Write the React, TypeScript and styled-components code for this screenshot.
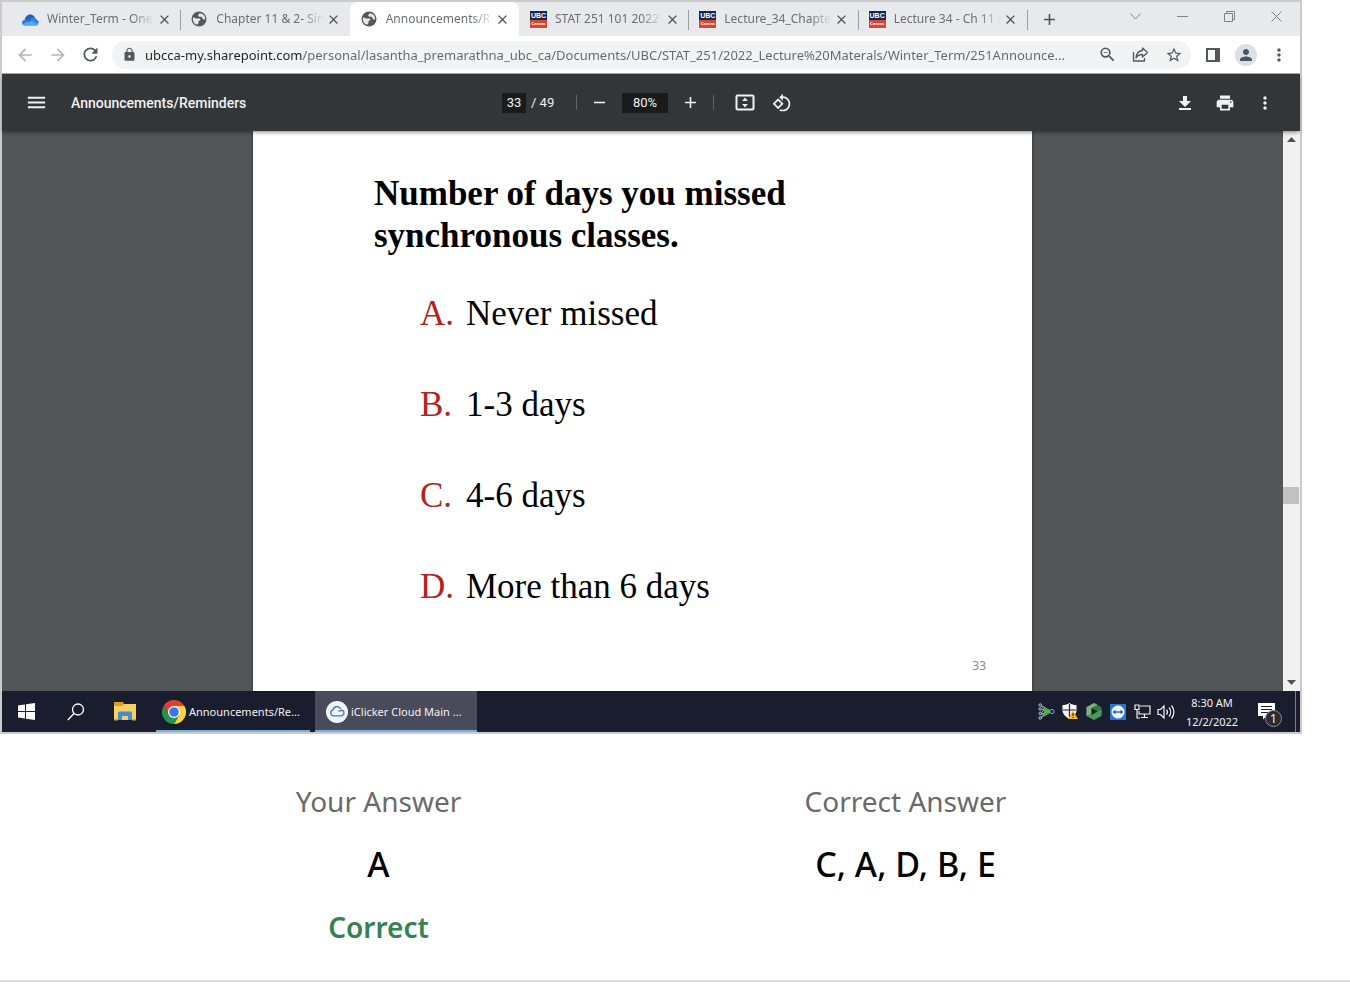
import React from "react";
import styled, { createGlobalStyle } from "styled-components";
import {
  MdAdd,
  MdArrowBack,
  MdArrowForward,
  MdClose,
  MdLock,
  MdMenu,
  MdMoreVert,
  MdPerson,
  MdPrint,
  MdRefresh,
  MdRemove,
  MdRotate90DegreesCcw,
  MdStarBorder,
  MdZoomOut,
} from "react-icons/md";

const Global = createGlobalStyle`
  * { box-sizing: border-box; }
  body { margin: 0; background: #fff; color: #000; font-family: "Noto Sans", "Open Sans", sans-serif; }
  button { border: 0; padding: 0; background: none; color: inherit; font: inherit; cursor: pointer; }
  h1, h2, p, ol, dl, dd { margin: 0; padding: 0; }
  svg { display: block; flex: none; }
`;

const Capture = styled.section`
  margin-right: 48px;
  border: 2px solid #cbcbcb;
`;

/* ---------- browser tabs ---------- */

const TabStrip = styled.div`
  display: flex;
  align-items: stretch;
  height: 34px;
  padding-left: 9px;
  background: #e8e9ed;
`;

const Tabs = styled.div`
  display: flex;
  flex: 0 1 1016px;
  min-width: 0;
`;

const Tab = styled.div<{ $active?: boolean; $divider?: boolean }>`
  position: relative;
  display: flex;
  flex: 1 1 0;
  align-items: center;
  min-width: 0;
  padding: 0 6px 0 10px;
  border-radius: 8px 8px 0 0;
  background: ${(p) => (p.$active ? "#fff" : "transparent")};

  &::after {
    content: "";
    position: absolute;
    top: 8px;
    right: -1px;
    width: ${(p) => (p.$divider ? "1px" : "0")};
    height: 20px;
    background: #9b9ea3;
  }
`;

const TabLabel = styled.button`
  flex: 1;
  min-width: 0;
  margin-left: 8px;
  overflow: hidden;
  white-space: nowrap;
  text-align: left;
  font-size: 12px;
  line-height: 18px;
  color: #6b6e73;
  mask-image: linear-gradient(90deg, #000 80%, transparent 100%);
`;

const TabClose = styled.button`
  display: grid;
  flex: none;
  place-items: center;
  width: 20px;
  height: 20px;
  color: #4e5156;
`;

const NewTab = styled.button`
  display: grid;
  place-items: center;
  width: 44px;
  color: #4e5156;
`;

const WindowButtons = styled.div`
  display: flex;
  margin-left: auto;
  height: 28px;
`;

const WindowButton = styled.button`
  display: grid;
  place-items: center;
  width: 47px;
  color: #808286;
`;

const CourseIcon = styled.span`
  display: flex;
  flex: none;
  flex-direction: column;
  width: 17px;
  height: 17px;
  margin-left: 1px;
  background: #d9452f;
  color: #fff;
  text-align: center;
  font-family: "Liberation Sans", Arial, sans-serif;
  font-weight: 700;
`;

const CourseTop = styled.span`
  height: 9px;
  background: #14284f;
  font-size: 7px;
  line-height: 9px;
`;

const CourseBottom = styled.span`
  font-size: 4px;
  line-height: 8px;
`;

/* ---------- address bar ---------- */

const AddressRow = styled.div`
  display: flex;
  align-items: center;
  height: 38px;
  padding: 0 5px 0 6px;
  border-bottom: 1px solid #a6a7a9;
  background: #fff;
`;

const IconButton = styled.button<{ $dim?: boolean }>`
  display: grid;
  flex: none;
  place-items: center;
  width: 33px;
  height: 28px;
  color: ${(p) => (p.$dim ? "#b5b7ba" : "#54575b")};
`;

const Omnibox = styled.form`
  display: flex;
  flex: 1;
  align-items: center;
  min-width: 0;
  height: 28px;
  margin: 0 5px;
  padding: 0 1px 0 10px;
  border-radius: 14px;
  background: #f1f3f4;
  color: #54575b;
`;

const UrlInput = styled.input`
  flex: 1;
  min-width: 0;
  height: 24px;
  margin-left: 8px;
  padding: 0;
  border: 0;
  outline: 0;
  font: 13px "Noto Sans", "Open Sans", sans-serif;
  color: transparent;
  background: linear-gradient(90deg, #202124 157px, #63666b 157px);
  background-clip: text;
  -webkit-background-clip: text;
`;

const Avatar = styled.span`
  display: grid;
  place-items: center;
  width: 22px;
  height: 22px;
  border-radius: 50%;
  background: #dcdfe5;
  color: #4a5368;
`;

/* ---------- document viewer ---------- */

const ViewerBar = styled.header`
  position: relative;
  z-index: 1;
  display: grid;
  grid-template-columns: 1fr auto 1fr;
  align-items: center;
  height: 57px;
  background: #323639;
  color: #f1f1f1;
  font-family: Roboto, sans-serif;
  font-size: 13px;
  box-shadow: 0 2px 4px -1px rgba(0, 0, 0, 0.5);
`;

const ViewerGroup = styled.div<{ $end?: boolean }>`
  display: flex;
  align-items: center;
  justify-content: ${(p) => (p.$end ? "flex-end" : "flex-start")};
  padding: ${(p) => (p.$end ? "0 15px 0 0" : "0 0 0 16px")};
`;

const ViewerControls = styled.div`
  display: flex;
  align-items: center;
`;

const ViewerButton = styled.button`
  display: grid;
  place-items: center;
  width: 37px;
  height: 36px;
`;

const ViewerEndButton = styled(ViewerButton)`
  width: 40px;
`;

const DocTitle = styled.h1`
  margin-left: 16px;
  font-size: 14px;
  font-weight: 500;
  line-height: 20px;
`;

const NumberField = styled.input<{ $wide?: boolean }>`
  width: ${(p) => (p.$wide ? "46px" : "24px")};
  height: 20px;
  margin: ${(p) => (p.$wide ? "0 4px" : "0 5px 0 0")};
  padding: 0;
  border: 0;
  background: #191b1c;
  color: inherit;
  font: inherit;
  text-align: center;
`;

const Rule = styled.span<{ $spaced?: boolean }>`
  width: 1px;
  height: 15px;
  margin: ${(p) => (p.$spaced ? "0 12px 0 4px" : "0 4px")};
  background: #606467;
`;

const PageTotal = styled.span`
  width: 41px;
  line-height: 20px;
`;

const Viewer = styled.div`
  display: flex;
  background: #525659;
`;

const PageArea = styled.main`
  display: flex;
  flex: 1;
  justify-content: center;
  min-width: 0;
`;

const Slide = styled.article`
  display: flex;
  flex: 0 1 779px;
  flex-direction: column;
  min-height: 560px;
  padding: 42px 46px 15px 121px;
  background: #fff;
  box-shadow: 0 0 3px rgba(0, 0, 0, 0.5);
  font-family: "Liberation Serif", "Times New Roman", serif;
  font-size: 35px;
  line-height: 42px;
`;

const Question = styled.h2`
  max-width: 460px;
  font-size: inherit;
  font-weight: 700;
`;

const Choices = styled.ol`
  display: flex;
  flex-direction: column;
  gap: 49px;
  margin: 36px 0 0 46px;
  list-style: none;
`;

const Choice = styled.li`
  display: flex;
`;

const Letter = styled.span`
  width: 46px;
  color: #b3221b;
`;

const SlideNumber = styled.p`
  margin-top: auto;
  text-align: right;
  font: 12px/20px "Noto Sans", "Open Sans", sans-serif;
  color: #8b8b8b;
`;

const Scrollbar = styled.div`
  display: flex;
  flex-direction: column;
  width: 17px;
  background: #f1f1f1;
`;

const ScrollButton = styled.button`
  display: grid;
  place-items: center;
  height: 17px;
  color: #505050;
`;

const Thumb = styled.div`
  height: 17px;
  margin-right: 1px;
  background: #c1c1c1;
`;

const TrackPart = styled.div<{ $share: number }>`
  flex: ${(p) => p.$share} 1 0;
`;

/* ---------- taskbar ---------- */

const Taskbar = styled.footer`
  display: flex;
  align-items: stretch;
  height: 41px;
  background: #1a1d2d;
  color: #f2f2f5;
  font-size: 11px;
`;

const TaskIcon = styled.button`
  display: grid;
  place-items: center;
  width: 49px;
`;

const TaskButton = styled.button<{ $active?: boolean }>`
  display: flex;
  align-items: center;
  width: ${(p) => (p.$active ? "162px" : "154px")};
  margin-left: ${(p) => (p.$active ? "5px" : "7px")};
  padding-left: ${(p) => (p.$active ? "11px" : "6px")};
  box-shadow: inset 0 -2px #76aee0;
  background: ${(p) => (p.$active ? "#494b5a" : "transparent")};
  white-space: nowrap;
`;

const TaskText = styled.span`
  margin-left: 3px;
`;

const Tray = styled.div`
  display: flex;
  align-items: center;
  margin-left: auto;
`;

const TrayButton = styled.button`
  display: grid;
  place-items: center;
  width: 24px;
  height: 32px;
`;

const Clock = styled.time`
  width: 68px;
  text-align: center;
  line-height: 19px;
`;

const Notices = styled.button`
  position: relative;
  width: 49px;
  height: 40px;
  padding-left: 12px;
`;

const NoticeCount = styled.span`
  position: absolute;
  right: 13px;
  bottom: 5px;
  width: 17px;
  height: 17px;
  border: 1px solid #8d8e92;
  border-radius: 50%;
  background: #2b2c30;
  font-size: 12px;
  line-height: 15px;
`;

const ShowDesktop = styled.button`
  align-self: stretch;
  width: 5px;
  border-left: 1px solid #7c7f8b;
`;

/* ---------- answers ---------- */

const Answers = styled.dl`
  display: grid;
  grid-template-columns: 1fr 1fr;
  padding: 47px 181px 33px 115px;
  border-bottom: 2px solid #dcdcdc;
  text-align: center;
  line-height: 40px;
`;

const AnswerColumn = styled.div`
  display: flex;
  flex-direction: column;
  gap: 23px;
`;

const AnswerLabel = styled.dt`
  font-size: 28px;
  color: #6a6a6a;
`;

const AnswerValue = styled.dd`
  font-size: 34px;
  font-weight: 500;
`;

const Verdict = styled.dd`
  font-size: 28px;
  font-weight: 600;
  color: #33824f;
`;

const Cloud = () => (
  <svg width="18" height="17" viewBox="0 0 18 17">
    <path d="M4 9.500C3.500 5.500 7 3 10 3.500c2 .3 3.300 1.500 4 3L9 12H3Z" fill="#1f5fc0" />
    <path d="M9 8.500c1.500-2.500 6-2.500 7 .5 1.500.7 2 1.800 1.800 3L15 14Z" fill="#3189dc" />
    <path d="M1 11.500c0-2 2-3.500 4.500-3 1.500.2 2.500 1 4 1.800l7.500 2.700c-.5 1-1.400 1.500-2.500 1.500H4c-2 0-3-1.300-3-3Z" fill="#2f7ad6" />
    <path d="M1.500 13 9 10.300l8.200 2.700c-.5 1-1.500 1.500-2.700 1.500H4c-1 0-2-.5-2.500-1.500Z" fill="#4eabee" />
  </svg>
);

const Globe = () => (
  <svg width="18" height="18" viewBox="0 0 18 18">
    <circle cx="9" cy="9" r="7.500" fill="#54575b" />
    <path d="M3.200 7.200 6 8.500h3.500c1 0 1.200 1.600.3 2L8.500 11v2l-1.300 1.800C4.500 14 2.800 12 2.900 9Z" fill="#e8e9ed" />
    <path d="M9.500 3.200 8 5.500l1.500 1.300h2.300l1 2.200 2.300.8C15.500 6.300 13.500 3.500 9.500 3.200Z" fill="#e8e9ed" />
  </svg>
);

const Course = () => (
  <CourseIcon>
    <CourseTop>UBC</CourseTop>
    <CourseBottom>Canvas</CourseBottom>
  </CourseIcon>
);

const tabs = [
  { label: "Winter_Term - OneD", icon: Cloud, divider: true },
  { label: "Chapter 11 & 2- Sin", icon: Globe },
  { label: "Announcements/Re", icon: Globe, active: true },
  { label: "STAT 251 101 2022W", icon: Course, divider: true },
  { label: "Lecture_34_Chapter", icon: Course, divider: true },
  { label: "Lecture 34 - Ch 11 &", icon: Course, divider: true },
];

const choices = [
  ["A.", "Never missed"],
  ["B.", "1-3 days"],
  ["C.", "4-6 days"],
  ["D.", "More than 6 days"],
];

const ShareIcon = () => (
  <svg width="17" height="17" viewBox="0 0 17 17" fill="none" stroke="currentColor" strokeWidth="1.300" strokeLinejoin="round">
    <path d="M1.500 6v9h11v-3" />
    <path d="M10.500 2 15.500 6.500l-5 4.500V8.500C7.500 8.300 5.500 9.500 4 12c.3-4 2.500-7 6.500-7.500Z" />
  </svg>
);

const SidePanelIcon = () => (
  <svg width="14" height="14" viewBox="0 0 14 14" fill="currentColor">
    <path d="M0 0h14v14H0ZM2 2v10h7V2Z" fillRule="evenodd" />
  </svg>
);

const DownloadIcon = () => (
  <svg width="14" height="16" viewBox="0 0 14 16" fill="currentColor">
    <path d="M5 1h4v5h4l-6 6-6-6h4ZM1 13h12v2H1Z" />
  </svg>
);

const FitIcon = () => (
  <svg width="20" height="17" viewBox="0 0 20 17">
    <rect x="1.500" y="1.500" width="17" height="14" rx="1" fill="none" stroke="currentColor" strokeWidth="2" />
    <path d="m10 3.500 2.800 3.500H7.200ZM10 13.500 7.200 10h5.600Z" fill="currentColor" />
  </svg>
);

const Arrow = ({ down }: { down?: boolean }) => (
  <svg width="9" height="5" viewBox="0 0 9 5" fill="currentColor">
    <path d={down ? "M0 0h9L4.500 5Z" : "M0 5h9L4.500 0Z"} />
  </svg>
);

const WindowsLogo = () => (
  <svg width="17" height="17" viewBox="0 0 17 17" fill="#fff">
    <path d="M0 2.500 7 1.500V8H0ZM8 1.300 17 0v8H8ZM0 9h7v6.500l-7-1ZM8 9h9v8l-9-1.300Z" />
  </svg>
);

const SearchIcon = () => (
  <svg width="18" height="18" viewBox="0 0 18 18" fill="none" stroke="#fff" strokeWidth="1.300">
    <circle cx="11" cy="6.500" r="5.500" />
    <path d="M7 10.500.8 17" />
  </svg>
);

const FolderIcon = () => (
  <svg width="22" height="19" viewBox="0 0 22 19">
    <path d="M0 2h22v16H0Z" fill="#f7cf62" />
    <path d="M0 0h9.500v3L8 4H0Z" fill="#dc9d25" />
    <path d="M4 18v-7a1.500 1.500 0 0 1 1.500-1.500h11A1.500 1.500 0 0 1 18 11v7h-4v-4H8v4Z" fill="#3f8fd6" />
    <path d="M0 17h4v1.500H0ZM18 17h4v1.500h-4Z" fill="#dba93a" />
  </svg>
);

const ChromeLogo = () => (
  <svg width="24" height="24" viewBox="0 0 24 24">
    <path d="M12 6h10.400A12 12 0 0 1 12 24l5.200-9Z" fill="#fdd03f" />
    <path d="M1.600 6A12 12 0 0 0 12 24l5.200-9L12 17l-5.200-2Z" fill="#24964b" />
    <path d="M12 6h10.400A12 12 0 0 0 1.600 6l5.200 9Z" fill="#dc4234" />
    <circle cx="12" cy="12" r="6" fill="#fff" />
    <circle cx="12" cy="12" r="4.800" fill="#3b78e7" />
  </svg>
);

const IClickerLogo = () => (
  <svg width="22" height="22" viewBox="0 0 22 22">
    <circle cx="11" cy="11" r="11" fill="#f3f4f7" />
    <path
      d="M15.300 9.200a2.700 2.700 0 0 1-.3 5.600H7.500a2.900 2.900 0 0 1-.6-5.700 4.200 4.200 0 0 1 7.600-1.600M16.500 9.300c-1.200 0-2 .8-3.700.8"
      fill="none"
      stroke="#3a78c8"
      strokeWidth="1.300"
      strokeLinecap="round"
    />
  </svg>
);

const NodesIcon = () => (
  <svg width="17" height="17" viewBox="0 0 17 17" fill="none">
    <path d="m2.500 2 11 6.500-11 6.500M2.500 6l11 2.500-11 2.500M2.500 2l4 4-4 5 4 0-4 4" stroke="#86c878" strokeWidth="1" />
    <path d="m6 5 6.500 3.500L6 12Z" fill="#5fae4c" />
    {[2, 6, 10.500, 15].map((y) => (
      <circle key={y} cx="2.200" cy={y} r="1.300" stroke="#a9bbd6" fill="#26334d" />
    ))}
    <circle cx="14" cy="8.500" r="2.200" stroke="#7f9acb" fill="#1c2a50" />
  </svg>
);

const ShieldIcon = () => (
  <svg width="16" height="17" viewBox="0 0 16 17">
    <path d="M7.500 0c2 1.500 4.500 2 7 2v5c0 4-3 7-7 9-4-2-7-5-7-9V2c2.500 0 5-.5 7-2Z" fill="#f4f4f4" />
    <path d="M7.500 1v14M1 7h13" stroke="#20232f" strokeWidth="1.200" />
    <path d="M11 7.500 16 16H6Z" fill="#f5b921" />
    <path d="M11 10v3m0 1v1" stroke="#382b05" strokeWidth="1.200" />
  </svg>
);

const HexIcon = () => (
  <svg width="16" height="17" viewBox="0 0 16 17">
    <path d="m8 0 7.500 4.200v8.500L8 17 .5 12.700V4.200Z" fill="#2f7a45" />
    <path d="M8 0 .5 4.200v8.500l5 2.300V5l6-3.300Z" fill="#7db184" />
    <path d="m8 17-7.500-4.300 4.500-2 10.500-4v6Z" fill="#4b9659" />
    <path d="m5.500 5 6 3.500-6 3.500Z" fill="#11281d" />
  </svg>
);

const RemoteIcon = () => (
  <svg width="16" height="16" viewBox="0 0 16 16">
    <path d="M0 0h16v16H0Z" fill="#2479d8" />
    <circle cx="8" cy="8" r="6.500" fill="#fff" />
    <path d="m2.500 8 3-2.500v1.700h5V5.500l3 2.500-3 2.500V8.800h-5v1.700Z" fill="#1c69c8" />
  </svg>
);

const NetworkIcon = () => (
  <svg width="17" height="15" viewBox="0 0 17 15" fill="none" stroke="#f2f2f5" strokeWidth="1.200">
    <path d="M6 2h10v8H5V7M10.500 10v3.500M7 13.500h7M1 1h4v4.500H1ZM3 5.500V14h3" />
  </svg>
);

const VolumeIcon = () => (
  <svg width="18" height="16" viewBox="0 0 18 16" fill="none" stroke="#f2f2f5" strokeWidth="1.200">
    <path d="M1 5.500h2.500L7 2v12l-3.500-3.500H1ZM9.500 5.500a4 4 0 0 1 0 5M12 3.500a7 7 0 0 1 0 9M14.500 1.500a10 10 0 0 1 0 13" />
  </svg>
);

const NoticeIcon = () => (
  <svg width="17" height="17" viewBox="0 0 17 17">
    <path d="M0 0h17v13H8.500L5 16.500V13H0Z" fill="#fff" />
    <path d="M3 3.500h11M3 6.500h11M3 9.500h7" stroke="#1a1d2d" strokeWidth="1.200" />
  </svg>
);

const trayIcons = [
  ["Network agent", NodesIcon],
  ["Security", ShieldIcon],
  ["Recorder", HexIcon],
  ["Remote support", RemoteIcon],
  ["Network", NetworkIcon],
  ["Volume", VolumeIcon],
] as const;

export default function App() {
  return (
    <>
      <Global />
      <Capture>
        <TabStrip>
          <Tabs>
            {tabs.map(({ label, icon: Icon, active, divider }) => (
              <Tab key={label} $active={active} $divider={divider}>
                <Icon />
                <TabLabel>{label}</TabLabel>
                <TabClose aria-label={`Close ${label}`}>
                  <MdClose size={15} />
                </TabClose>
              </Tab>
            ))}
          </Tabs>
          <NewTab aria-label="New tab">
            <MdAdd size={19} />
          </NewTab>
          <WindowButtons>
            <WindowButton aria-label="Search tabs">
              <svg width="11" height="7" viewBox="0 0 11 7" fill="none" stroke="currentColor">
                <path d="m.5.500 5 5.500 5-5.500" />
              </svg>
            </WindowButton>
            <WindowButton aria-label="Minimize">
              <svg width="11" height="1" viewBox="0 0 11 1">
                <path d="M0 0h11v1H0Z" fill="currentColor" />
              </svg>
            </WindowButton>
            <WindowButton aria-label="Restore">
              <svg width="11" height="11" viewBox="0 0 11 11" fill="none" stroke="currentColor">
                <path d="M.5 2.500h8v8h-8ZM2.500 2.500v-2h8v8h-2" />
              </svg>
            </WindowButton>
            <WindowButton aria-label="Close window">
              <svg width="11" height="11" viewBox="0 0 11 11" fill="none" stroke="currentColor">
                <path d="m.5.500 10 10m0-10-10 10" />
              </svg>
            </WindowButton>
          </WindowButtons>
        </TabStrip>

        <AddressRow>
          <IconButton $dim aria-label="Back">
            <MdArrowBack size={20} />
          </IconButton>
          <IconButton $dim aria-label="Forward">
            <MdArrowForward size={20} />
          </IconButton>
          <IconButton aria-label="Reload">
            <MdRefresh size={21} />
          </IconButton>
          <Omnibox>
            <MdLock size={15} />
            <UrlInput
              aria-label="Address"
              defaultValue="ubcca-my.sharepoint.com/personal/lasantha_premarathna_ubc_ca/Documents/UBC/STAT_251/2022_Lecture%20Materals/Winter_Term/251Announce..."
            />
            <IconButton type="button" aria-label="Zoom">
              <MdZoomOut size={19} />
            </IconButton>
            <IconButton type="button" aria-label="Share">
              <ShareIcon />
            </IconButton>
            <IconButton type="button" aria-label="Bookmark">
              <MdStarBorder size={18} />
            </IconButton>
          </Omnibox>
          <IconButton aria-label="Side panel">
            <SidePanelIcon />
          </IconButton>
          <IconButton aria-label="Profile">
            <Avatar>
              <MdPerson size={18} />
            </Avatar>
          </IconButton>
          <IconButton aria-label="Browser menu">
            <MdMoreVert size={20} />
          </IconButton>
        </AddressRow>

        <ViewerBar>
          <ViewerGroup>
            <ViewerButton aria-label="Menu">
              <MdMenu size={23} />
            </ViewerButton>
            <DocTitle>Announcements/Reminders</DocTitle>
          </ViewerGroup>
          <ViewerControls>
            <NumberField aria-label="Page number" defaultValue="33" />
            <PageTotal>/ 49</PageTotal>
            <Rule />
            <ViewerButton aria-label="Zoom out">
              <MdRemove size={19} />
            </ViewerButton>
            <NumberField $wide aria-label="Zoom level" defaultValue="80%" />
            <ViewerButton aria-label="Zoom in">
              <MdAdd size={19} />
            </ViewerButton>
            <Rule $spaced />
            <ViewerButton aria-label="Fit to page">
              <FitIcon />
            </ViewerButton>
            <ViewerButton aria-label="Rotate counterclockwise">
              <MdRotate90DegreesCcw size={20} />
            </ViewerButton>
          </ViewerControls>
          <ViewerGroup $end>
            <ViewerEndButton aria-label="Download">
              <DownloadIcon />
            </ViewerEndButton>
            <ViewerEndButton aria-label="Print">
              <MdPrint size={20} />
            </ViewerEndButton>
            <ViewerEndButton aria-label="More actions">
              <MdMoreVert size={20} />
            </ViewerEndButton>
          </ViewerGroup>
        </ViewerBar>

        <Viewer>
          <PageArea>
            <Slide>
              <Question>Number of days you missed synchronous classes.</Question>
              <Choices>
                {choices.map(([letter, text]) => (
                  <Choice key={letter}>
                    <Letter>{letter}</Letter>
                    <span>{text}</span>
                  </Choice>
                ))}
              </Choices>
              <SlideNumber>33</SlideNumber>
            </Slide>
          </PageArea>
          <Scrollbar>
            <ScrollButton aria-label="Scroll up">
              <Arrow />
            </ScrollButton>
            <TrackPart $share={2} />
            <Thumb />
            <TrackPart $share={1} />
            <ScrollButton aria-label="Scroll down">
              <Arrow down />
            </ScrollButton>
          </Scrollbar>
        </Viewer>

        <Taskbar>
          <TaskIcon aria-label="Start">
            <WindowsLogo />
          </TaskIcon>
          <TaskIcon aria-label="Search">
            <SearchIcon />
          </TaskIcon>
          <TaskIcon aria-label="File Explorer">
            <FolderIcon />
          </TaskIcon>
          <TaskButton>
            <ChromeLogo />
            <TaskText>Announcements/Re...</TaskText>
          </TaskButton>
          <TaskButton $active>
            <IClickerLogo />
            <TaskText>iClicker Cloud Main ...</TaskText>
          </TaskButton>
          <Tray>
            {trayIcons.map(([name, Icon]) => (
              <TrayButton key={name} aria-label={name}>
                <Icon />
              </TrayButton>
            ))}
            <Clock>
              8:30 AM
              <br />
              12/2/2022
            </Clock>
            <Notices aria-label="1 notification">
              <NoticeIcon />
              <NoticeCount>1</NoticeCount>
            </Notices>
            <ShowDesktop aria-label="Show desktop" />
          </Tray>
        </Taskbar>
      </Capture>

      <Answers>
        <AnswerColumn>
          <AnswerLabel>Your Answer</AnswerLabel>
          <AnswerValue>A</AnswerValue>
          <Verdict>Correct</Verdict>
        </AnswerColumn>
        <AnswerColumn>
          <AnswerLabel>Correct Answer</AnswerLabel>
          <AnswerValue>C, A, D, B, E</AnswerValue>
        </AnswerColumn>
      </Answers>
    </>
  );
}
